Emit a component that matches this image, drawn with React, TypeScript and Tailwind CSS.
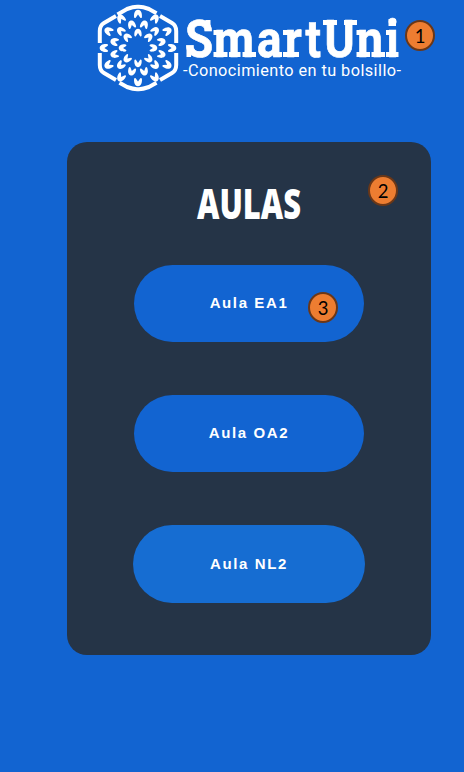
type Petal = [number, number, number];

const petals: Petal[] = [
  ...Array.from({ length: 8 }, (_, i): Petal => [15.3, i * 45, 0.92]),
  ...Array.from({ length: 12 }, (_, i): Petal => [24.3, 15 + i * 30, 0.96]),
  ...Array.from({ length: 12 }, (_, i): Petal => [34, i * 30, 1]),
];

// Slab serifs of the wordmark: x, y, width, height
const slabs = [
  [205.5, 20, 5, 11], [186.5, 46, 4.5, 11],
  [213.5, 30, 6, 5], [213.5, 52, 14, 5], [229, 52, 11.5, 5], [242.5, 52, 13.5, 5],
  [275, 52, 7, 5],
  [283, 30, 7, 5], [283, 52, 16, 5],
  [323, 20, 14, 5], [344, 20, 13, 5],
  [356.5, 30, 6, 5], [356.5, 52, 13.5, 5], [371.5, 52, 13.5, 5],
  [386, 30, 6, 5], [386, 52, 12.5, 5], [388.5, 19, 7.5, 7],
];

function Logo() {
  return (
    <svg className="h-[88px] w-[82px] shrink-0" viewBox="-41 -44 82 88" fill="none">
      <g stroke="white" strokeWidth="4">
        <path d="M-20.5-33.5L-11-39Q-4-41.5 0-41.2Q4-41.5 11-39L18.5-34.7" />
        <path d="M22-32L34-25Q38.2-22.5 38.2-17V-5" />
        <path d="M38.2 5V17Q38.2 22.5 34 25L22 32" />
        <path d="M18.5 34.7L11 39Q4 41.5 0 41.2Q-4 41.5-11 39L-18.5 34.7" />
        <path d="M-22 32L-34 25Q-38.2 22.5-38.2 17V5" />
        <path d="M-38.2-5V-17Q-38.2-22.5-34-25L-22-32" />
      </g>
      {petals.map(([r, a, s], i) => (
        <path
          key={i}
          fill="white"
          transform={`rotate(${a}) translate(0 ${-r}) scale(${s})`}
          d="M0-4.3C2.8-4.3 4.4-.8 3.9 3.2Q3.4 4.6 2.3 3.8L0 .4L-2.3 3.8Q-3.4 4.6-3.9 3.2C-4.4-.8-2.8-4.3 0-4.3Z"
        />
      ))}
    </svg>
  );
}

function Badge({ n, place }: { n: number; place: string }) {
  return (
    <span className={`absolute flex h-[31px] w-[30px] items-center justify-center rounded-[50%] border-2 border-[#6b3717] bg-[#ed7d31] pt-px font-['Lato',sans-serif] text-[18.5px] leading-none text-black ${place}`}>
      {n}
    </span>
  );
}

export default function App() {
  return (
    <div className="relative h-[772px] w-[464px] overflow-hidden bg-[#1264d1]">
      <header className="flex h-[142px] items-start pt-1 pl-[97px] text-white">
        <Logo />
        <svg className="h-[88px] w-[223px] shrink-0 overflow-visible" viewBox="179 4 223 88" fill="white">
          <text x="210.2 243.5 292 323.9 347.2 368.8 406 439.2" y="57" transform="scale(.88 1)" fontFamily="Roboto,sans-serif" fontSize="52" fontWeight="700" stroke="white" strokeWidth=".7">SmartUni</text>
          {slabs.map(([x, y, w, h], i) => (
            <rect key={i} x={x} y={y} width={w} height={h} />
          ))}
          <text x="183" y="76" textLength="218" lengthAdjust="spacing" fontFamily="Roboto,sans-serif" fontSize="16.3">-Conocimiento en tu bolsillo-</text>
        </svg>
      </header>
      <main className="ml-[67px] flex h-[513px] w-[364px] flex-col items-center rounded-[20px] bg-[#253447]">
        <h1 className="flex h-[123px] items-start pt-[41px]">
          <svg className="h-[44px] w-[106px] overflow-visible" viewBox="0 0 106 44" fill="white">
            <text x="1" y="36" textLength="104" lengthAdjust="spacingAndGlyphs" fontFamily="'Open Sans',sans-serif" fontSize="43" fontWeight="800">AULAS</text>
          </svg>
        </h1>
        <div className="flex flex-col items-center gap-[53px] font-['Liberation_Sans',Arial,sans-serif] text-[15px] font-bold tracking-[1.6px] text-white">
          <button className="h-[77px] w-[230px] rounded-[39px] bg-[#1264d1]">Aula EA1</button>
          <button className="h-[77px] w-[230px] rounded-[39px] bg-[#1264d1]">Aula OA2</button>
          <button className="h-[78px] w-[232px] rounded-[39px] bg-[#166dd2]">Aula NL2</button>
        </div>
      </main>
      <Badge n={1} place="left-[405px] top-[20px]" />
      <Badge n={2} place="left-[368px] top-[175px]" />
      <Badge n={3} place="left-[308px] top-[292px]" />
    </div>
  );
}
